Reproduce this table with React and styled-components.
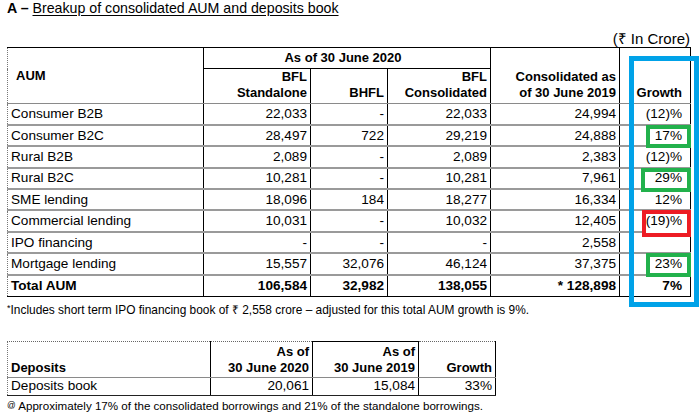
import styled, { createGlobalStyle } from "styled-components";

const GlobalStyle = createGlobalStyle`
  body {
    margin: 0;
    background: #fff;
  }
  * {
    box-sizing: border-box;
  }
`;

// name, standalone, bhfl, consolidated, 2019, growth, mark colour, mark left, mark drop
const aumRows = [
  ["Consumer B2B", "22,033", "-", "22,033", "24,994", "(12)%"],
  ["Consumer B2C", "28,497", "722", "29,219", "24,888", "17%", "green", 26, 3],
  ["Rural B2B", "2,089", "-", "2,089", "2,383", "(12)%"],
  ["Rural B2C", "10,281", "-", "10,281", "7,961", "29%", "green", 21, 4],
  ["SME lending", "18,096", "184", "18,277", "16,334", "12%"],
  ["Commercial lending", "10,031", "-", "10,032", "12,405", "(19)%", "red", 22, 6],
  ["IPO financing", "-", "-", "-", "2,558", ""],
  ["Mortgage lending", "15,557", "32,076", "46,124", "37,375", "23%", "green", 26, 3],
];

const markColors = {
  green: "#22b14c",
  red: "#ed1c24",
};

const App = () => {
  return (
    <>
      <GlobalStyle />
      <Page>
        <Title>
          <b>A – </b>
          <u>Breakup of consolidated AUM and deposits book</u>
        </Title>
        <Unit>(₹ In Crore)</Unit>

        <TableWrap>
          <AumTable>
            <colgroup>
              <col style={{ width: 196 }} />
              <col style={{ width: 107 }} />
              <col style={{ width: 77 }} />
              <col style={{ width: 103 }} />
              <col style={{ width: 129 }} />
              <col style={{ width: 71 }} />
            </colgroup>
            <thead>
              <tr>
                <HeadCell rowSpan={2} $left $middle>
                  AUM
                </HeadCell>
                <SpanCell colSpan={3}>As of 30 June 2020</SpanCell>
                <HeadCell rowSpan={2}>
                  Consolidated as
                  <br />
                  of 30 June 2019
                </HeadCell>
                <HeadCell rowSpan={2} $growth>
                  Growth
                </HeadCell>
              </tr>
              <tr>
                <HeadCell $sub>
                  BFL
                  <br />
                  Standalone
                </HeadCell>
                <HeadCell $sub>BHFL</HeadCell>
                <HeadCell $sub>
                  BFL
                  <br />
                  Consolidated
                </HeadCell>
              </tr>
            </thead>
            <tbody>
              {aumRows.map(([name, a, b, c, d, g, mark, left, drop]) => (
                <Row key={name}>
                  <Cell $left>{name}</Cell>
                  <Cell>{a}</Cell>
                  <Cell>{b}</Cell>
                  <Cell>{c}</Cell>
                  <Cell>{d}</Cell>
                  <GrowthCell>
                    {mark && <Mark $color={markColors[mark]} $offset={left} $drop={drop} />}
                    <span>{g}</span>
                  </GrowthCell>
                </Row>
              ))}
              <TotalRow>
                <Cell $left>Total AUM</Cell>
                <Cell>106,584</Cell>
                <Cell>32,982</Cell>
                <Cell>138,055</Cell>
                <Cell>* 128,898</Cell>
                <GrowthCell>7%</GrowthCell>
              </TotalRow>
            </tbody>
          </AumTable>
          <Frame />
        </TableWrap>

        <Note>
          <sup>*</sup>Includes short term IPO financing book of ₹ 2,558 crore – adjusted for this
          total AUM growth is 9%.
        </Note>

        <DepositTable>
          <colgroup>
            <col style={{ width: 203 }} />
            <col style={{ width: 102 }} />
            <col style={{ width: 106 }} />
            <col style={{ width: 77 }} />
          </colgroup>
          <thead>
            <tr>
              <DepHead $left>Deposits</DepHead>
              <DepHead>
                As of
                <br />
                30 June 2020
              </DepHead>
              <DepHead $solidTop>
                As of
                <br />
                30 June 2019
              </DepHead>
              <DepHead>Growth</DepHead>
            </tr>
          </thead>
          <tbody>
            <tr>
              <DepCell $left>Deposits book</DepCell>
              <DepCell>20,061</DepCell>
              <DepCell>15,084</DepCell>
              <DepCell>33%</DepCell>
            </tr>
          </tbody>
        </DepositTable>

        <SmallNote>
          <sup>@</sup> Approximately 17% of the consolidated borrowings and 21% of the standalone
          borrowings.
        </SmallNote>
      </Page>
    </>
  );
};

const Page = styled.div`
  width: 699px;
  height: 416px;
  padding: 0 9px 0 7px;
  overflow: hidden;
  color: #000;
  font-family: "Liberation Sans", Arial, sans-serif;
`;

const Title = styled.div`
  font-size: 14.2px;
  line-height: 16px;
  b {
    font-weight: 700;
  }
  u {
    text-underline-offset: 2px;
  }
`;

const Unit = styled.div`
  margin-top: 15px;
  text-align: right;
  font-size: 15px;
  line-height: 16px;
  height: 16px;
`;

const TableWrap = styled.div`
  position: relative;
  width: 683px;
`;

const AumTable = styled.table`
  width: 683px;
  border-collapse: collapse;
  table-layout: fixed;
  font-size: 13.6px;
  line-height: 16px;
  border-top: 1px solid #000;
`;

const HeadCell = styled.th`
  font-size: 13px;
  font-weight: 700;
  text-align: ${(p) => (p.$left ? "left" : "right")};
  vertical-align: ${(p) => (p.$middle ? "middle" : "bottom")};
  padding: ${(p) => (p.$left ? "0 0 0 8px" : p.$growth ? "0 8px 2px 0" : "0 3px 2px 0")};
  height: ${(p) => (p.$sub ? "35px" : "21px")};
  border-right: 1px solid #000;
  border-left: ${(p) => (p.$left ? "1px dotted #777" : "none")};
  border-bottom: 1px solid #8a8a8a;
  border-top: ${(p) => (p.$growth ? "1px dotted #777" : "1px solid #000")};
`;

const SpanCell = styled.th`
  font-size: 13px;
  font-weight: 700;
  text-align: center;
  vertical-align: middle;
  height: 21px;
  padding: 0 8px 0 0;
  border-right: 1px solid #000;
  border-bottom: 1px solid #000;
`;

const Row = styled.tr`
  height: 21.4px;
`;

const TotalRow = styled.tr`
  height: 21.4px;
  font-weight: 700;
  td {
    border-top: 2px solid #8a8a8a;
    border-bottom: 1px solid #000;
  }
`;

const Cell = styled.td`
  text-align: ${(p) => (p.$left ? "left" : "right")};
  padding: ${(p) => (p.$left ? "0 0 0 3px" : "0 3px 0 0")};
  vertical-align: middle;
  white-space: nowrap;
  border-right: 1px solid #000;
  border-left: ${(p) => (p.$left ? "1px dotted #777" : "none")};
  border-bottom: 2px solid #9a9a9a;
`;

const GrowthCell = styled.td`
  position: relative;
  text-align: right;
  padding: 0 8px 0 0;
  vertical-align: middle;
  white-space: nowrap;
  border-right: 1px solid #000;
  border-bottom: 2px solid #9a9a9a;
  span {
    position: relative;
  }
`;

const Mark = styled.div`
  position: absolute;
  top: -1px;
  bottom: -${(p) => p.$drop}px;
  left: ${(p) => p.$offset}px;
  right: -1px;
  border: 4px solid ${(p) => p.$color};
  background: #fff;
`;

const Frame = styled.div`
  position: absolute;
  top: 9px;
  left: 622px;
  width: 70px;
  height: 251px;
  border: 5px solid #00a2e8;
  pointer-events: none;
`;

const Note = styled.div`
  margin-top: 5px;
  font-size: 11.9px;
  line-height: 16px;
  sup {
    font-size: 9px;
    line-height: 0;
    vertical-align: 3px;
  }
`;

const DepositTable = styled.table`
  margin-top: 23px;
  width: 488px;
  border-collapse: collapse;
  table-layout: fixed;
  font-size: 13.6px;
  line-height: 16px;
`;

const DepHead = styled.th`
  font-size: 13px;
  font-weight: 700;
  height: 36px;
  vertical-align: bottom;
  text-align: ${(p) => (p.$left ? "left" : "right")};
  padding: ${(p) => (p.$left ? "0 0 1px 3px" : "0 3px 1px 0")};
  border-top: ${(p) => (p.$solidTop ? "1px solid #000" : "1px dotted #666")};
  border-left: ${(p) => (p.$left ? "1px dotted #777" : "none")};
  border-right: 1px solid #000;
  border-bottom: 1px solid #8a8a8a;
`;

const DepCell = styled.td`
  height: 18px;
  vertical-align: middle;
  text-align: ${(p) => (p.$left ? "left" : "right")};
  padding: ${(p) => (p.$left ? "0 0 0 3px" : "0 3px 0 0")};
  border-left: ${(p) => (p.$left ? "1px dotted #777" : "none")};
  border-right: 1px solid #000;
  border-bottom: 1px solid #222;
`;

const SmallNote = styled.div`
  margin-top: 2px;
  font-size: 11.6px;
  line-height: 15px;
  sup {
    font-size: 8.5px;
    line-height: 0;
    vertical-align: 2px;
  }
`;

export default App;
